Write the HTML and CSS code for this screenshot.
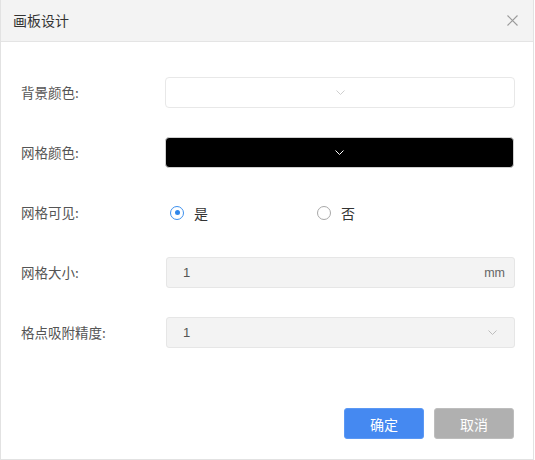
FILE: index.html
```html
<!DOCTYPE html>
<html lang="zh-CN">
<head>
<meta charset="utf-8">
<title>画板设计</title>
<link rel="stylesheet" href="styles.css">
</head>
<body>
<div class="dialog">
  <div class="dialog-header">
    <span class="dialog-title">画板设计</span>
    <span class="dialog-close">
      <svg width="11" height="11" viewBox="0 0 11 11"><path d="M0.5 0.5 L10.5 10.5 M10.5 0.5 L0.5 10.5" stroke="#9a9a9a" stroke-width="1.1" fill="none"/></svg>
    </span>
  </div>
  <div class="dialog-body">
    <div class="form">
      <div class="label">背景颜色:</div>
      <div class="control color-box color-white">
        <svg class="chev" width="9" height="5" viewBox="0 0 9 5"><path d="M0.5 0.5 L4.5 4.5 L8.5 0.5" stroke="#cfcfcf" stroke-width="1" fill="none"/></svg>
      </div>

      <div class="label">网格颜色:</div>
      <div class="control color-box color-black">
        <svg class="chev" width="9" height="5" viewBox="0 0 9 5"><path d="M0.5 0.5 L4.5 4.5 L8.5 0.5" stroke="#ffffff" stroke-width="1" fill="none"/></svg>
      </div>

      <div class="label">网格可见:</div>
      <div class="control radios">
        <label class="radio-opt"><span class="radio checked"></span><span class="radio-text">是</span></label>
        <label class="radio-opt"><span class="radio"></span><span class="radio-text">否</span></label>
      </div>

      <div class="label">网格大小:</div>
      <div class="control field">
        <span class="field-value">1</span>
        <span class="field-unit">mm</span>
      </div>

      <div class="label">格点吸附精度:</div>
      <div class="control field field-select">
        <span class="field-value">1</span>
        <svg class="chev-sm" width="9" height="5" viewBox="0 0 9 5"><path d="M0.5 0.5 L4.5 4.5 L8.5 0.5" stroke="#bdbdbd" stroke-width="1" fill="none"/></svg>
      </div>
    </div>
  </div>
  <div class="dialog-footer">
    <button class="btn btn-primary">确定</button>
    <button class="btn btn-cancel">取消</button>
  </div>
</div>
</body>
</html>
```

FILE: styles.css
```css
* { box-sizing: border-box; }
html, body { margin: 0; padding: 0; }
body {
  font-family: "Noto Sans CJK SC", "Noto Sans", "Liberation Sans", sans-serif;
  background: #ffffff;
}
.dialog {
  width: 534px;
  height: 460px;
  border: 1px solid #e2e2e2;
  border-top: none;
  display: flex;
  flex-direction: column;
  background: #fff;
}
.dialog-header {
  height: 42px;
  background: #f3f3f3;
  border-bottom: 1px solid #e4e4e4;
  display: flex;
  align-items: center;
  justify-content: space-between;
  padding: 0 15px 0 12px;
  flex-shrink: 0;
}
.dialog-title {
  font-size: 14px;
  color: #333;
  line-height: 1;
  margin-top: -1px;
}
.dialog-close {
  display: flex;
  width: 11px;
  height: 11px;
  margin-top: -1px;
}
.dialog-body {
  padding: 35px 18px 0 20px;
}
.form {
  display: grid;
  grid-template-columns: 145px 1fr;
  grid-auto-rows: 31px;
  row-gap: 29px;
  align-items: center;
}
.label {
  font-size: 13.5px;
  color: #555;
  line-height: 1;
}
.control {
  height: 31px;
}
.color-box {
  border-radius: 4px;
  display: flex;
  align-items: center;
  justify-content: center;
}
.color-white {
  border: 1px solid #e8e8e8;
  background: #fff;
  margin-left: -1px;
}
.color-black {
  border: 1px solid #cfcfcf;
  background: #000;
  margin-right: 1px;
  margin-left: -1px;
}
.chev { display: block; }
.radios {
  display: flex;
  align-items: center;
}
.radio-opt {
  width: 147px;
  display: flex;
  align-items: center;
  padding-left: 4px;
}
.radio {
  width: 14px;
  height: 14px;
  border-radius: 50%;
  border: 1px solid #a8a8a8;
  background: #fff;
  display: flex;
  align-items: center;
  justify-content: center;
}
.radio.checked {
  border-color: #3d90ee;
}
.radio.checked::after {
  content: "";
  width: 5px;
  height: 5px;
  border-radius: 50%;
  background: #2f86ea;
}
.radio-text {
  margin-left: 10px;
  font-size: 14px;
  color: #333;
  line-height: 1;
}
.field {
  background: #f3f3f3;
  border: 1px solid #e6e6e6;
  border-radius: 3px;
  display: flex;
  align-items: center;
  justify-content: space-between;
  padding: 0 9px 0 16px;
}
.field-select {
  padding-right: 17px;
}
.field-value {
  font-size: 13px;
  color: #555;
  font-family: "Liberation Sans", "Noto Sans", sans-serif;
}
.field-unit {
  font-size: 12.5px;
  color: #666;
  font-family: "Liberation Sans", "Noto Sans", sans-serif;
}
.dialog-footer {
  margin-top: auto;
  display: flex;
  justify-content: flex-end;
  gap: 10px;
  padding: 0 19px 20px 0;
}
.btn {
  width: 80px;
  height: 31px;
  border: none;
  border-radius: 3px;
  color: #fff;
  font-size: 14px;
  font-family: "Noto Sans CJK SC", "Noto Sans", sans-serif;
  padding: 0;
}
.btn-primary {
  background: #4589f1;
  border: 1px solid #5b98f4;
}
.btn-cancel {
  background: #b0b0b0;
  border: 1px solid #bdbdbd;
}
```
